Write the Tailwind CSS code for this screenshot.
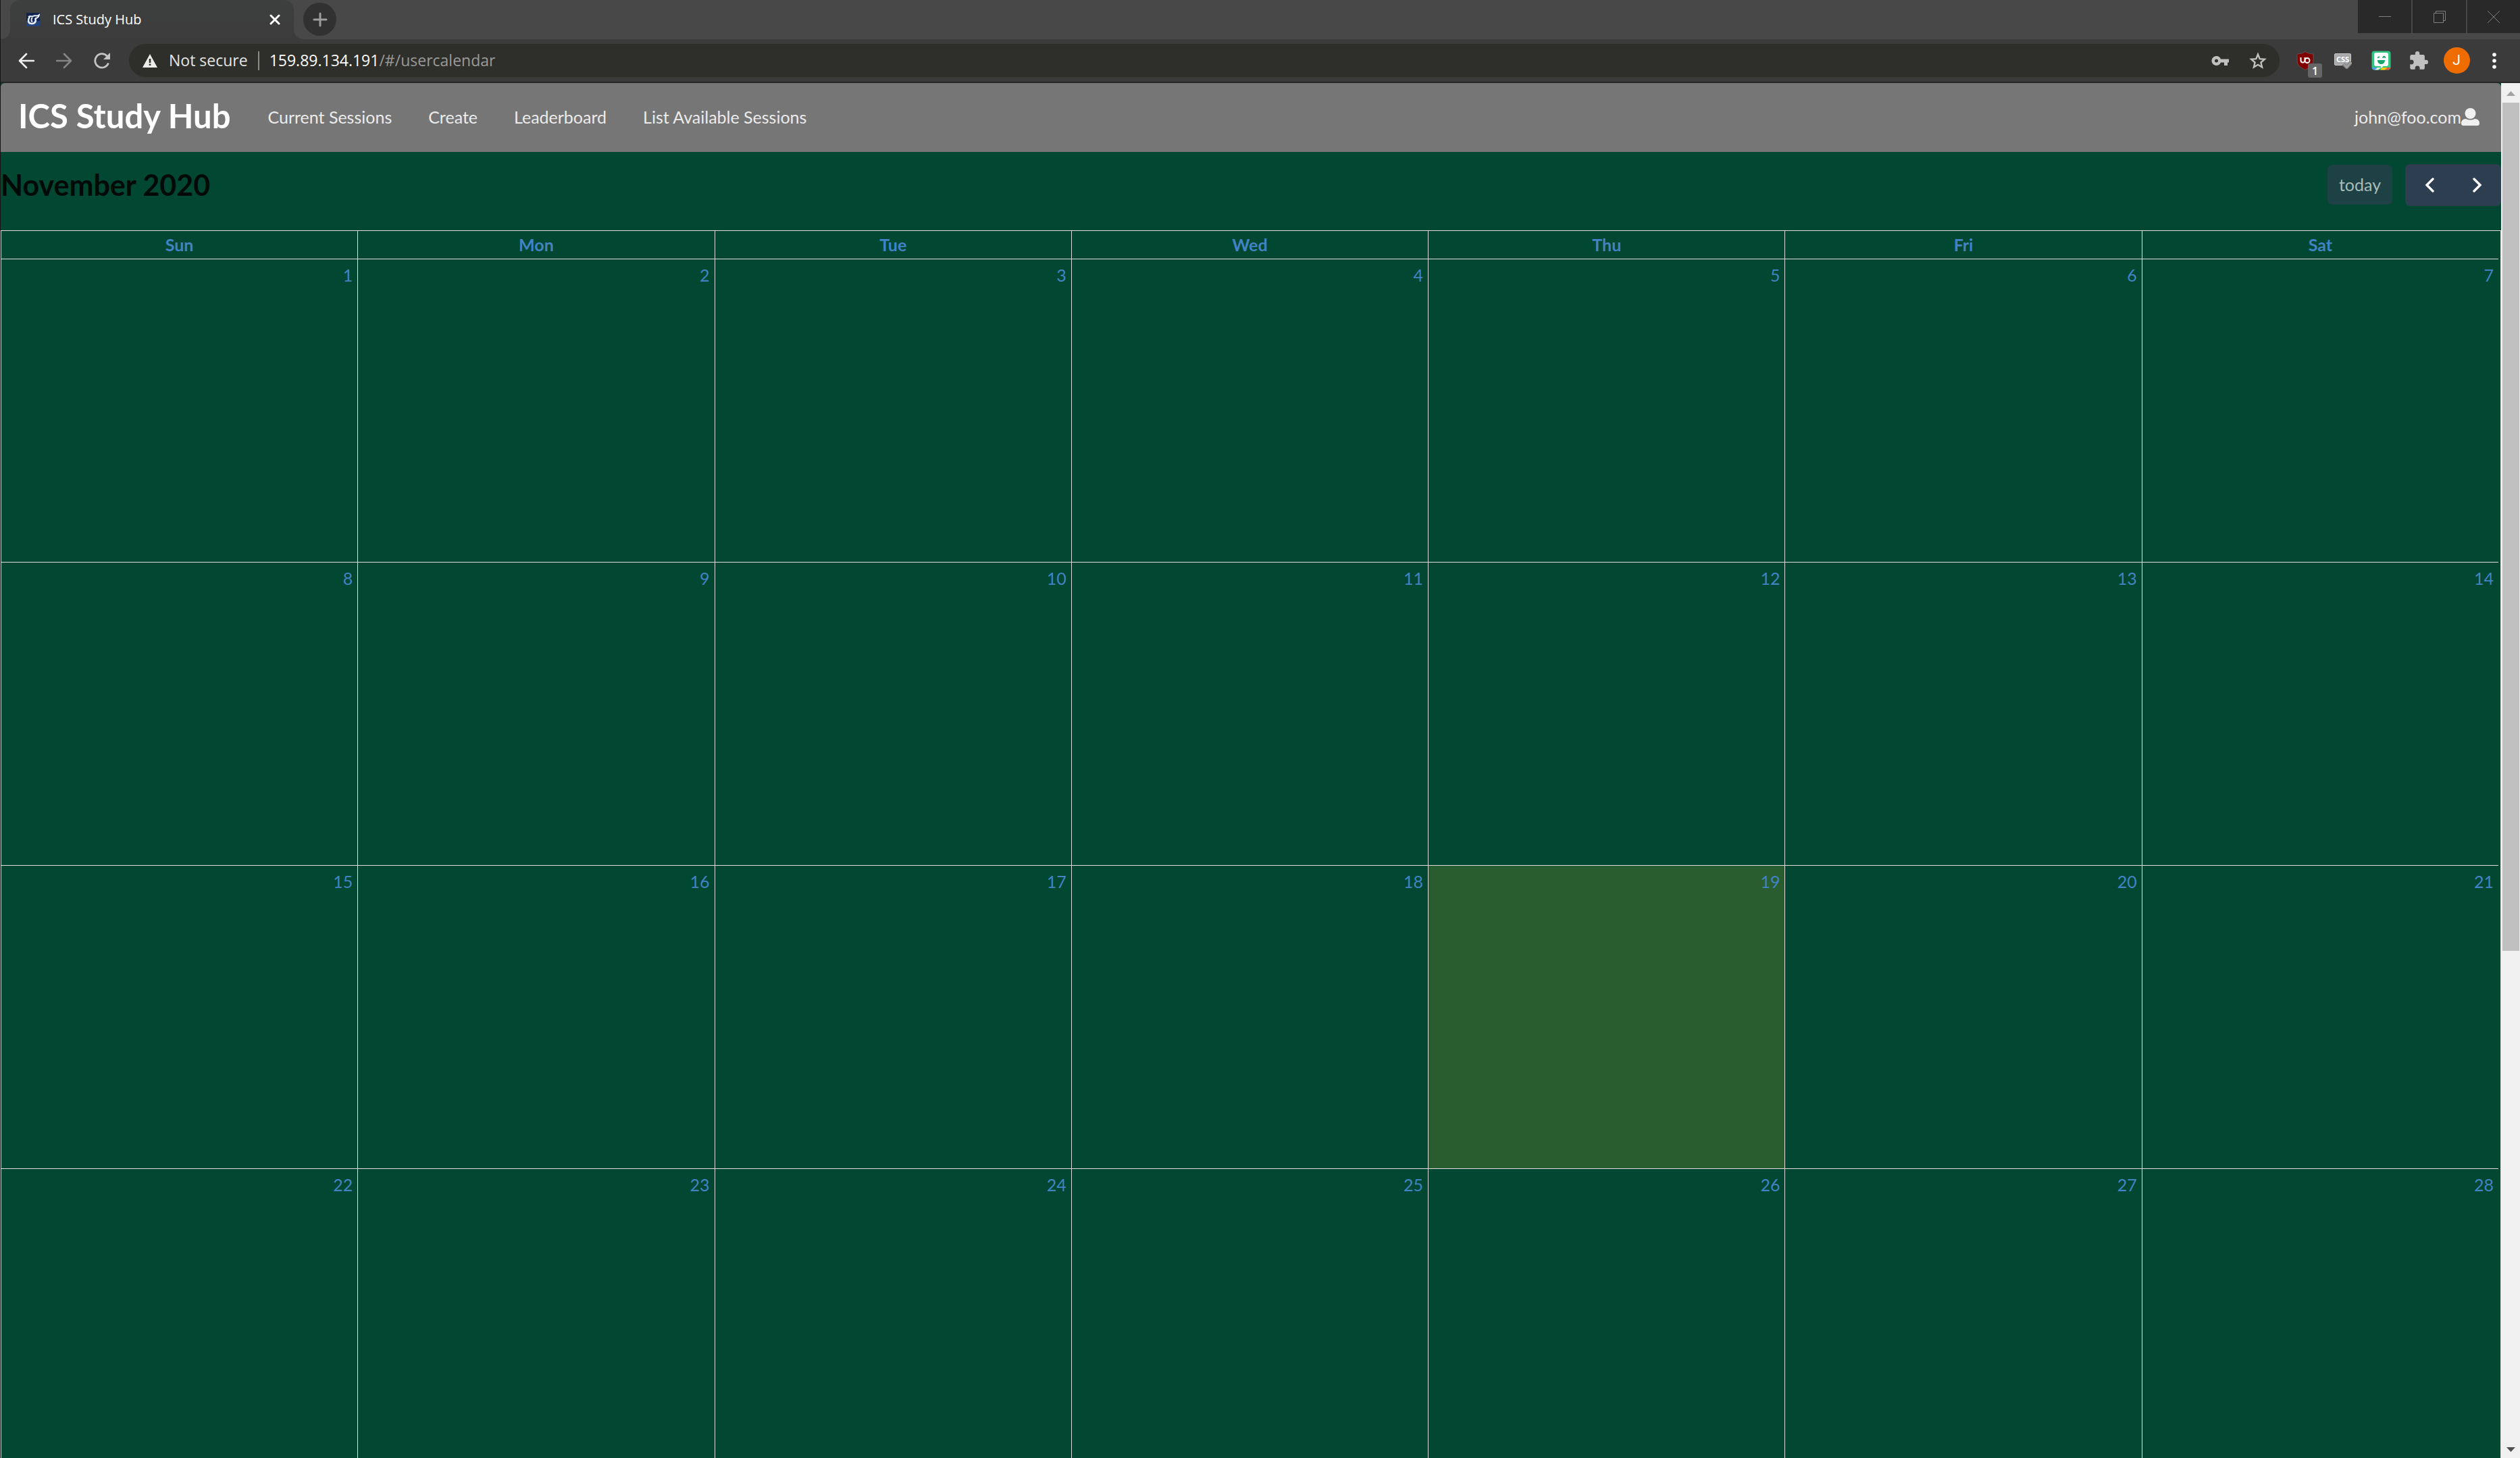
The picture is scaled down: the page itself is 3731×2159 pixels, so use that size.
<!DOCTYPE html>
<html lang="en">
<head>
<meta charset="utf-8">
<title>ICS Study Hub</title>
<script src="https://cdn.jsdelivr.net/npm/@tailwindcss/browser@4"></script>
</head>
<body class="h-screen overflow-hidden flex flex-col border-l border-[#141414] bg-[#024731]">

<!-- Browser chrome -->
<header class="shrink-0 bg-[#3b3b3b] border-b-2 border-[#272727] font-['Open_Sans',sans-serif]">
  <div class="flex h-[58px] bg-[#484848]">
    <div class="w-3.5 bg-[#3b3b3b]"><div class="h-full bg-[#484848] rounded-br-[14px]"></div></div>
    <div class="w-[420px] flex items-center pl-6 pr-5 rounded-t-[14px] bg-linear-to-b from-[#3e403f] to-[#3b3b3b]">
      <svg class="size-5 shrink-0" viewBox="0 0 20 20"><rect width="20" height="20" fill="#10244f"/><rect y="12" width="20" height="8" fill="#24427c"/><path d="M5 6c-3 4-3 10 3 10 5 0 7-4 5-8" fill="none" stroke="#e8ecf4" stroke-width="2.600"/><path d="M3 6c3-2 5 0 7-1 3-2 5 1 9-2-1 4-3 5-6 5M9 7c-2 2-2 5 0 6" fill="none" stroke="#e8ecf4" stroke-width="2"/></svg>
      <span class="ml-[19px] pb-px flex-1 text-[20px] leading-7 text-white whitespace-nowrap">ICS Study Hub</span>
      <button aria-label="Close tab"><svg class="size-4" viewBox="0 0 16 16" stroke="#fff" stroke-width="3" stroke-linecap="round"><path d="M2 2l12 12M14 2L2 14"/></svg></button>
    </div>
    <div class="w-3.5 bg-[#3b3b3b]"><div class="h-full bg-[#484848] rounded-bl-[14px]"></div></div>
    <button aria-label="New tab" class="mt-1 size-[49px] rounded-full bg-[#313131] grid place-items-center"><svg class="size-[22px]" viewBox="0 0 22 22" stroke="#9d9d9d" stroke-width="3" stroke-linecap="round"><path d="M11 2v18M2 11h18"/></svg></button>
    <div class="ml-auto flex gap-0.5 h-[49px]">
      <button aria-label="Minimize" class="w-[79px] bg-[#292929] grid place-items-center"><svg class="size-[18px]" viewBox="0 0 18 18" stroke="#808080"><path d="M0 8.500h18"/></svg></button>
      <button aria-label="Restore" class="w-[79px] bg-[#292929] grid place-items-center"><svg class="size-[18px]" viewBox="0 0 18 18" stroke="#808080" fill="none"><path d="M.5 3.500h14v14h-14zM3.500 3.500v-3h14v14h-3"/></svg></button>
      <button aria-label="Close" class="w-[78px] bg-[#292929] grid place-items-center"><svg class="size-[18px]" viewBox="0 0 18 18" stroke="#808080"><path d="M0 0l18 18M18 0L0 18"/></svg></button>
    </div>
  </div>

  <div class="flex items-center h-[63px] pl-2.5 pr-2.5">
    <button aria-label="Back" class="w-14 grid place-items-center"><svg class="size-6" viewBox="0 0 24 24" fill="none" stroke="#f0f0f0" stroke-width="2.600" stroke-linecap="round" stroke-linejoin="round"><path d="M23 12H2M12 2L2 12l10 10"/></svg></button>
    <button aria-label="Forward" class="w-14 grid place-items-center"><svg class="size-6" viewBox="0 0 24 24" fill="none" stroke="#858585" stroke-width="2.600" stroke-linecap="round" stroke-linejoin="round"><path d="M1 12h21M12 2l10 10-10 10"/></svg></button>
    <button aria-label="Reload" class="w-14 grid place-items-center"><svg class="size-6" viewBox="0 0 24 24" fill="none" stroke="#c4c4c4" stroke-width="2.800"><path d="M21.500 15.500A10.200 10.200 0 1 1 19.500 5"/><path d="M24 0v10H14z" fill="#c4c4c4" stroke="none"/></svg></button>
    <div class="ml-3 mr-2.5 flex-1 flex items-center h-[49px] rounded-full bg-[#2e2e2a] pl-5 pr-1 text-[23px] leading-8 whitespace-nowrap">
      <button class="flex items-center text-[#e4e4e4]"><svg class="w-[22px] h-5 mr-[17px]" viewBox="0 0 22 20"><path d="M11 0l11 20H0z" fill="#ececec"/><path d="M9.700 7h2.600v6H9.700zM9.700 14.500h2.600V17H9.700z" fill="#2e2e2a"/></svg><span class="pb-0.5">Not secure</span></button>
      <span class="w-0.5 h-7 bg-[#8a8a88] mx-[15px]"></span>
      <div role="textbox" aria-label="Address" class="flex-1 pb-0.5 text-[#9a9a98]"><span class="text-white">159.89.134.191</span>/#/usercalendar</div>
      <button aria-label="Passwords" class="w-14 grid place-items-center"><svg class="w-[26px] h-4" viewBox="0 0 26 16" fill="#c0c0c0"><path fill-rule="evenodd" d="M7.500 1a7 7 0 1 0 6.500 9.500h5V15h5v-4.500h2V5.500H14A7 7 0 0 0 7.500 1zm0 4.600a2.500 2.500 0 1 1 0 5 2.500 2.500 0 0 1 0-5z"/></svg></button>
      <button aria-label="Bookmark" class="w-14 grid place-items-center"><svg class="size-[26px]" viewBox="0 0 26 26" fill="none" stroke="#c0c0c0" stroke-width="2.400"><path d="M13 3.500l2.700 6.700 7.200.6-5.500 4.700 1.700 7L13 18.800l-6.100 3.700 1.700-7-5.500-4.700 7.200-.6z"/></svg></button>
    </div>
    <button aria-label="uBlock Origin, 1 blocked" class="relative w-14 grid place-items-center"><svg class="w-[26px] h-7" viewBox="0 0 26 28"><path d="M13 .5c3.500 2.400 7.500 3.300 12 3.500v10c0 6-4 9.500-12 13.500C5 23.500 1 20 1 14V4C5.500 3.800 9.500 2.900 13 .5z" fill="#800000" stroke="#6b5050"/><path d="M6.500 9v4.500a3 3 0 0 0 6 0V9" fill="none" stroke="#fff" stroke-width="2"/><circle cx="16" cy="13.500" r="3.500" fill="none" stroke="#fff" stroke-width="2"/></svg><span class="absolute left-8 top-[18px] w-[21px] h-[21px] rounded-[3px] bg-[#666] text-white font-semibold text-[16px] leading-[22px] text-center">1</span></button>
    <button aria-label="CSS checker" class="w-14 grid place-items-center"><svg class="w-[26px] h-6" viewBox="0 0 26 24"><rect x=".5" y="1.500" width="24" height="17" rx="1.500" fill="#a8a8a8" stroke="#c9c9c9"/><text x="12.500" y="14" text-anchor="middle" font-family="Open Sans" font-weight="700" font-size="11" fill="#fff">CSS</text><path d="M13.500 17l5 5 7-8" fill="none" stroke="#707070" stroke-width="5"/><path d="M14 17l4.500 4.500 6.500-7.500" fill="none" stroke="#a0a0a0" stroke-width="3"/></svg></button>
    <button aria-label="Bitmoji" class="w-14 grid place-items-center"><svg class="size-[29px]" viewBox="0 0 29 29"><rect x=".5" y=".5" width="28" height="28" rx="4" fill="#34c583"/><path d="M1 25h8l-4 3.500H4A3.500 3.500 0 0 1 1 25z" fill="#4d9cf0"/><path d="M9 25h5l-4 3.500H5z" fill="#e7eee9"/><path d="M16 25h8l-4 3.500h-7z" fill="#ffc800"/><path d="M24 25h4a3.500 3.500 0 0 1-3 3.500h-5z" fill="#f0503c"/><path d="M7 3h15a3 3 0 0 1 3 3v14a3 3 0 0 1-3 3h-4.500L14.500 26l-1-3H7a3 3 0 0 1-3-3V6a3 3 0 0 1 3-3z" fill="#fff"/><path d="M9 14h11c0 8-11 8-11 0z" fill="#1aa56d"/><path d="M9 10.500l3-1.500M17 11c.5-3 3-3 3.500 0" fill="none" stroke="#1aa56d" stroke-width="1.800"/></svg></button>
    <button aria-label="Extensions" class="w-14 grid place-items-center"><svg class="size-7" viewBox="1 1 22 22" fill="#c0c0c0"><path d="M20.500 11H19V7a2 2 0 0 0-2-2h-4V3.500a2.500 2.500 0 0 0-5 0V5H4a2 2 0 0 0-2 2v3.800h1.500a2.700 2.700 0 0 1 0 5.400H2V20a2 2 0 0 0 2 2h3.800v-1.500a2.700 2.700 0 0 1 5.400 0V22H17a2 2 0 0 0 2-2v-4h1.500a2.500 2.500 0 0 0 0-5z"/></svg></button>
    <button aria-label="Profile" class="w-14 grid place-items-center"><span class="size-[39px] rounded-full bg-[#ef6c00] text-white text-[21px] leading-[39px] text-center font-['Roboto',sans-serif]">J</span></button>
    <button aria-label="Menu" class="w-14 grid place-items-center"><svg class="w-1.5 h-6" viewBox="0 0 6 24" fill="#fff"><circle cx="3" cy="3" r="2.800"/><circle cx="3" cy="12" r="2.800"/><circle cx="3" cy="21" r="2.800"/></svg></button>
  </div>
</header>

<div class="flex flex-1 min-h-0 font-['Lato',sans-serif] text-[25px] leading-[34px]">
  <div class="flex-1 min-w-0 overflow-hidden">
    <nav class="flex items-center h-[102px] rounded-t-[6px] bg-[#767676] text-[#ebebeb] pb-0.5 pr-8 whitespace-nowrap">
      <a href="#/" class="pl-[26px] pr-7 text-[49px] leading-[60px] font-bold text-white pb-1">ICS Study Hub</a>
      <a href="#/sessions" class="px-[27px]">Current Sessions</a>
      <a href="#/create" class="px-[27px]">Create</a>
      <a href="#/leaderboard" class="px-[27px]">Leaderboard</a>
      <a href="#/list" class="px-[27px]">List Available Sessions</a>
      <button class="ml-auto flex items-center">john@foo.com<svg class="w-[27px] h-[26px]" viewBox="0 0 27 26" fill="#f0f0f0"><circle cx="13.500" cy="8" r="8"/><path d="M7 16c4 2 9 2 13 0 5 0 7 3 7 6.500 0 2-1 3.500-3 3.500H3c-2 0-3-1.500-3-3.500C0 19 2 16 7 16z"/></svg></button>
    </nav>

    <main>
      <div class="flex items-center h-[97px] mb-[19px] whitespace-nowrap">
        <h2 class="flex-1 text-[43px] leading-[56px] font-bold text-[#020a07]">November 2020</h2>
        <button disabled class="h-[59px] w-24 pb-0.5 rounded-[7px] bg-[#1e4146] text-[#a8bdb8]">today</button>
        <div class="ml-[19px] flex h-[62px] rounded-[7px] bg-[#2c3e50] text-white">
          <button aria-label="Previous month" class="w-[71px] grid place-items-center"><svg class="w-3.5 h-[22px]" viewBox="0 0 14 22" fill="none" stroke="currentColor" stroke-width="3.400" stroke-linecap="round"><path d="M12 2l-9 9 9 9"/></svg></button>
          <button aria-label="Next month" class="w-[71px] grid place-items-center"><svg class="w-3.5 h-[22px]" viewBox="0 0 14 22" fill="none" stroke="currentColor" stroke-width="3.400" stroke-linecap="round"><path d="M2 2l9 9-9 9"/></svg></button>
        </div>
      </div>

      <div class="border-t border-r border-[#ddd] pr-[3px]">
        <table class="w-full table-fixed border-separate border-spacing-0 text-[#4183c4] [&_th]:h-[42px] [&_th]:p-0 [&_th]:pb-0.5 [&_th]:font-bold [&_th]:border-b [&_th]:border-l [&_th]:border-[#ddd] [&_td]:h-[449px] [&_td]:pt-[6px] [&_td]:pr-[7px] [&_td]:align-top [&_td]:text-right [&_td]:border-b [&_td]:border-l [&_td]:border-[#ddd]">
          <thead>
            <tr><th scope="col">Sun</th><th scope="col">Mon</th><th scope="col">Tue</th><th scope="col">Wed</th><th scope="col">Thu</th><th scope="col">Fri</th><th scope="col">Sat</th></tr>
          </thead>
          <tbody>
            <tr><td>1</td><td>2</td><td>3</td><td>4</td><td>5</td><td>6</td><td>7</td></tr>
            <tr><td>8</td><td>9</td><td>10</td><td>11</td><td>12</td><td>13</td><td>14</td></tr>
            <tr><td>15</td><td>16</td><td>17</td><td>18</td><td class="bg-[#295d30]">19</td><td>20</td><td>21</td></tr>
            <tr><td>22</td><td>23</td><td>24</td><td>25</td><td>26</td><td>27</td><td>28</td></tr>
          </tbody>
        </table>
      </div>
    </main>
  </div>

  <!-- Page scrollbar -->
  <div class="w-7 shrink-0 flex flex-col items-center bg-[#f0f0f0]" aria-hidden="true">
    <svg class="w-7 h-[29px] shrink-0" viewBox="0 0 28 29"><path d="M14.500 12L21 19H8z" fill="#a3a3a3"/></svg>
    <div class="w-full flex-1 pl-0.5 pr-px"><div class="h-[63.5%] bg-[#c0c0c0]"></div></div>
    <svg class="w-7 h-[29px] shrink-0" viewBox="0 0 28 29"><path d="M14.500 20L21 13H8z" fill="#505050"/></svg>
  </div>
</div>
</body>
</html>
